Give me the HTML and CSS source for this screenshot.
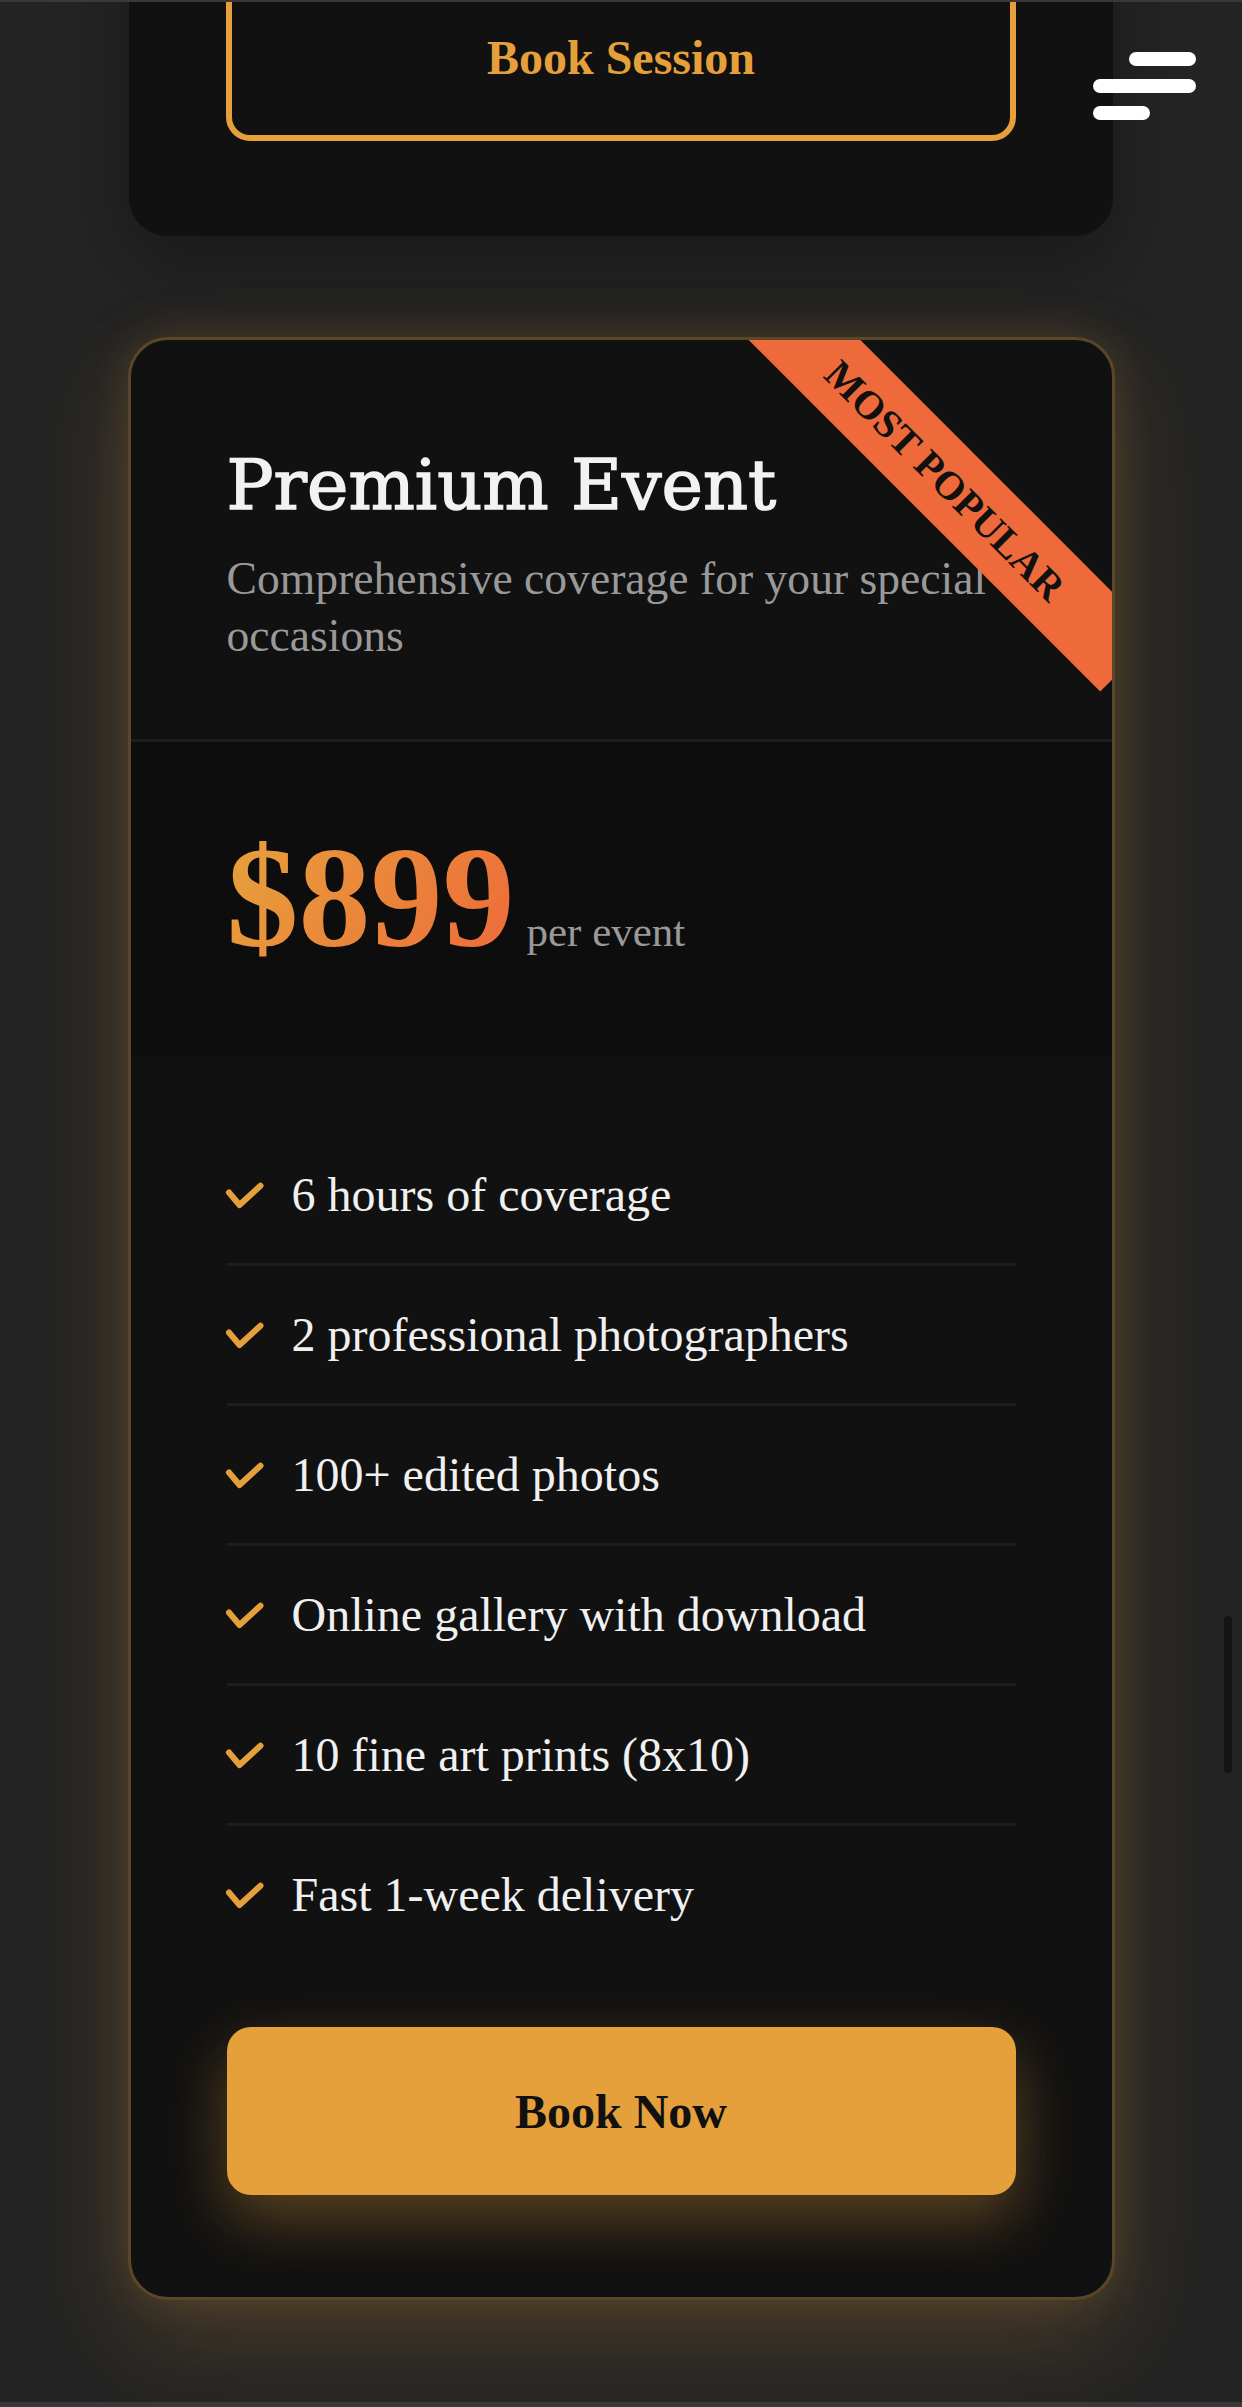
FILE: index.html
```html
<!DOCTYPE html>
<html lang="en">
<head>
    <meta charset="UTF-8">
    <meta name="viewport" content="width=device-width, initial-scale=1.0">
    <title>Pricing</title>
    <link rel="stylesheet" href="styles.css">
</head>
<body>
    <button class="menu-toggle" aria-label="Open menu">
        <span class="bar bar-short"></span>
        <span class="bar bar-long"></span>
        <span class="bar bar-tiny"></span>
    </button>

    <section class="pricing-list">
        <div class="pricing-card basic-card">
            <a href="#" class="outline-btn">Book Session</a>
        </div>

        <div class="pricing-card featured-card">
            <div class="ribbon">MOST POPULAR</div>
            <div class="card-header">
                <h2 class="plan-title">Premium Event</h2>
                <p class="plan-desc">Comprehensive coverage for your special occasions</p>
            </div>
            <div class="price-box">
                <span class="price">$899</span>
                <span class="price-unit">per event</span>
            </div>
            <div class="card-body">
                <ul class="feature-list">
                    <li>
                        <svg class="check" viewBox="0 0 38 28"><polyline points="2,11.5 12.5,24 33.5,4.7"/></svg>
                        6 hours of coverage
                    </li>
                    <li>
                        <svg class="check" viewBox="0 0 38 28"><polyline points="2,11.5 12.5,24 33.5,4.7"/></svg>
                        2 professional photographers
                    </li>
                    <li>
                        <svg class="check" viewBox="0 0 38 28"><polyline points="2,11.5 12.5,24 33.5,4.7"/></svg>
                        100+ edited photos
                    </li>
                    <li>
                        <svg class="check" viewBox="0 0 38 28"><polyline points="2,11.5 12.5,24 33.5,4.7"/></svg>
                        Online gallery with download
                    </li>
                    <li>
                        <svg class="check" viewBox="0 0 38 28"><polyline points="2,11.5 12.5,24 33.5,4.7"/></svg>
                        10 fine art prints (8x10)
                    </li>
                    <li>
                        <svg class="check" viewBox="0 0 38 28"><polyline points="2,11.5 12.5,24 33.5,4.7"/></svg>
                        Fast 1-week delivery
                    </li>
                </ul>
                <a href="#" class="solid-btn">Book Now</a>
            </div>
        </div>
    </section>

    <div class="scroll-thumb"></div>
</body>
</html>
```

FILE: styles.css
```css
html, body {
    margin: 0;
    padding: 0;
}

body {
    font-family: "Liberation Serif", "Times New Roman", serif;
    background-color: #242424;
    height: 2407px;
    overflow: hidden;
}

/* thin frame lines at the screen edges */
body::before,
body::after {
    content: "";
    position: fixed;
    left: 0;
    right: 0;
    background-color: #393939;
    z-index: 10;
}

body::before {
    top: 0;
    height: 2px;
}

body::after {
    bottom: 0;
    height: 5px;
}

.menu-toggle {
    position: fixed;
    top: 52px;
    left: 1093px;
    width: 103px;
    padding: 0;
    border: none;
    background: none;
    display: flex;
    flex-direction: column;
    gap: 13px;
    z-index: 20;
    cursor: pointer;
}

.bar {
    display: block;
    height: 14px;
    border-radius: 7px;
    background-color: #ffffff;
}

.bar-short {
    width: 67px;
    align-self: flex-end;
}

.bar-long {
    width: 103px;
}

.bar-tiny {
    width: 57px;
}

.pricing-list {
    display: flex;
    flex-direction: column;
    align-items: center;
    gap: 101px;
}

.pricing-card {
    box-sizing: border-box;
    background-color: #111111;
}

.basic-card {
    width: 984px;
    margin-top: -87px;
    padding: 60px 97px 95px;
    border-radius: 38px;
    box-shadow: 0 30px 80px rgba(0, 0, 0, 0.3);
}

.outline-btn {
    box-sizing: border-box;
    height: 168px;
    display: flex;
    align-items: center;
    justify-content: center;
    border: 6px solid #e5a03c;
    border-radius: 24px;
    color: #e5a03c;
    font-size: 48px;
    font-weight: bold;
    text-decoration: none;
}

.featured-card {
    position: relative;
    width: 987px;
    border: 3px solid #5a4629;
    border-radius: 40px;
    overflow: hidden;
    box-shadow: 0 0 40px rgba(229, 160, 60, 0.16), 0 40px 100px rgba(229, 160, 60, 0.18);
}

.ribbon {
    position: absolute;
    top: 101px;
    right: -92px;
    width: 518px;
    padding: 16px 0;
    background-color: #ee6a3a;
    color: #111111;
    font-size: 40px;
    font-weight: bold;
    text-align: center;
    transform: rotate(45deg);
    z-index: 2;
}

.card-header {
    padding: 102px 96px 75px;
    border-bottom: 3px solid #1d1d1d;
}

.plan-title {
    margin: 0 0 22px;
    font-family: "DejaVu Serif", Georgia, serif;
    font-size: 70px;
    font-weight: normal;
    line-height: 86px;
    color: #f2f2f2;
    -webkit-text-stroke: 1.5px #f2f2f2;
}

.plan-desc {
    margin: 0;
    font-size: 45.6px;
    line-height: 57px;
    color: #999999;
}

.price-box {
    display: flex;
    align-items: baseline;
    gap: 12px;
    padding: 84px 96px 86px;
    background-color: #0d0d0d;
}

.price {
    font-size: 144px;
    font-weight: bold;
    line-height: 1;
    background: linear-gradient(120deg, #e6a23b, #ee6a3a);
    -webkit-background-clip: text;
    background-clip: text;
    color: transparent;
}

.price-unit {
    font-size: 43px;
    color: #999999;
}

.card-body {
    padding: 70px 96px 102px;
}

.feature-list {
    list-style: none;
    margin: 0;
    padding: 0;
}

.feature-list li {
    display: flex;
    align-items: center;
    gap: 27px;
    padding: 41px 0;
    border-bottom: 3px solid #1e1e1e;
    font-size: 48px;
    line-height: 55px;
    color: #f0f0f0;
}

.feature-list li:last-child {
    border-bottom: none;
}

.check {
    flex: none;
    width: 38px;
    height: 28px;
    overflow: visible;
}

.check polyline {
    fill: none;
    stroke: #e5a03c;
    stroke-width: 6;
    stroke-linecap: round;
    stroke-linejoin: round;
}

.solid-btn {
    height: 168px;
    margin-top: 64px;
    display: flex;
    align-items: center;
    justify-content: center;
    border-radius: 24px;
    background-color: #e5a03c;
    color: #111111;
    font-size: 48px;
    font-weight: bold;
    text-decoration: none;
    box-shadow: 0 24px 60px rgba(229, 160, 60, 0.35);
}

.scroll-thumb {
    position: fixed;
    top: 1616px;
    left: 1224px;
    width: 8px;
    height: 157px;
    border-radius: 4px;
    background-color: #141414;
}
```
